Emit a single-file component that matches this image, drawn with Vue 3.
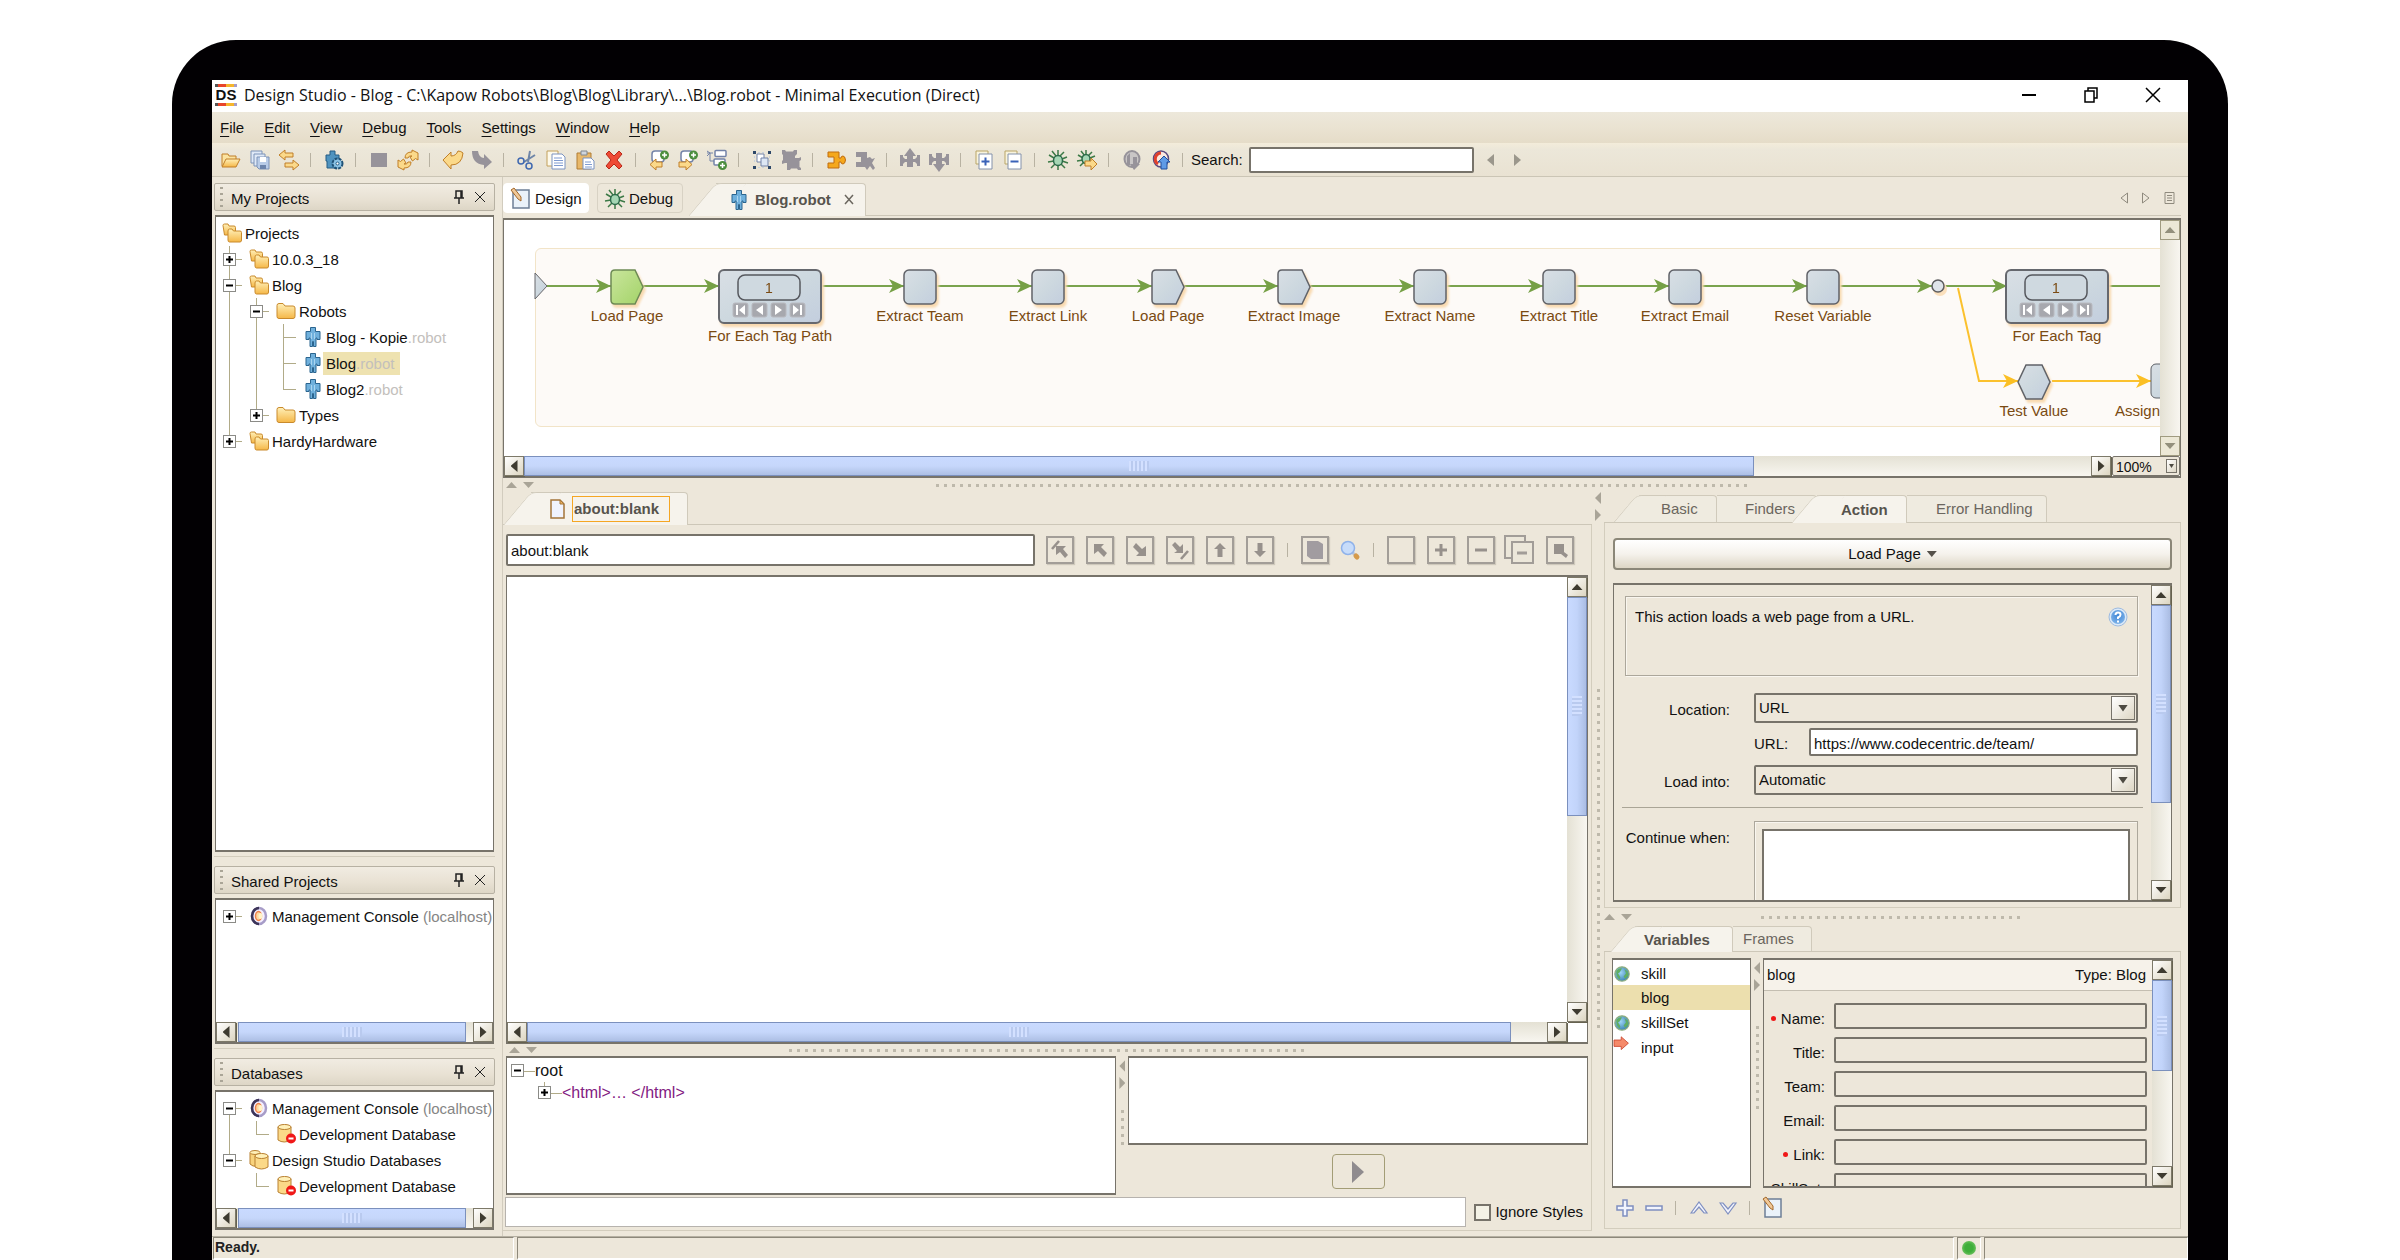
<script setup>
import { h } from 'vue'

const menus = ['File', 'Edit', 'View', 'Debug', 'Tools', 'Settings', 'Window', 'Help']

const toolGroups = [
  ['open', 'save-all', 'swap'],
  ['robot-gear'],
  ['stop', 'refresh'],
  ['undo', 'redo'],
  ['cut', 'copy', 'paste', 'delete'],
  ['step-before', 'step-after', 'branch-add'],
  ['group', 'ungroup'],
  ['snippet', 'snippet-off'],
  ['move-up', 'move-down'],
  ['expand', 'collapse'],
  ['bug', 'bug-go'],
  ['upload-off', 'upload'],
]

/* Guide cells: up/down = vertical line halves, arm = horizontal stub, box = expander sign */
const cells = {
  P: { up: 1, down: 1, arm: 1, box: '+' },
  p: { up: 1, arm: 1, box: '+' },
  q: { arm: 1, box: '+' },
  M: { up: 1, down: 1, arm: 1, box: '-' },
  F: { down: 1, arm: 1, box: '-' },
  m: { up: 1, arm: 1, box: '-' },
  T: { up: 1, down: 1, arm: 1 },
  L: { up: 1, arm: 1 },
  I: { up: 1, down: 1 },
  _: {},
}

const projectRows = [
  { guides: '', icon: 'folders', text: 'Projects' },
  { guides: 'P', icon: 'folders', text: '10.0.3_18' },
  { guides: 'M', icon: 'folders', text: 'Blog' },
  { guides: 'IM', icon: 'folder', text: 'Robots' },
  { guides: 'IIT', icon: 'robot', text: 'Blog - Kopie', dim: '.robot' },
  { guides: 'IIT', icon: 'robot', text: 'Blog', dim: '.robot', selected: true },
  { guides: 'IIL', icon: 'robot', text: 'Blog2', dim: '.robot' },
  { guides: 'Ip', icon: 'folder', text: 'Types' },
  { guides: 'p', icon: 'folders', text: 'HardyHardware' },
]
const sharedRows = [{ guides: 'q', icon: 'console', text: 'Management Console', note: '(localhost)' }]
const databaseRows = [
  { guides: 'F', icon: 'console', text: 'Management Console', note: '(localhost)' },
  { guides: 'IL', icon: 'db-off', text: 'Development Database' },
  { guides: 'm', icon: 'dbs', text: 'Design Studio Databases' },
  { guides: '_L', icon: 'db-off', text: 'Development Database' },
]
const panels = [
  { title: 'My Projects', rows: projectRows, kind: 'grow' },
  { title: 'Shared Projects', rows: sharedRows, kind: 'shared', scroll: true },
  { title: 'Databases', rows: databaseRows, kind: 'databases', scroll: true },
]

const nodes = [
  { x: 124, y: 49, kind: 'page', label: 'Load Page', current: true },
  { x: 267, y: 49, kind: 'loop', label: 'For Each Tag Path' },
  { x: 417, y: 49, kind: 'step', label: 'Extract Team' },
  { x: 545, y: 49, kind: 'step', label: 'Extract Link' },
  { x: 665, y: 49, kind: 'page', label: 'Load Page' },
  { x: 791, y: 49, kind: 'page', label: 'Extract Image' },
  { x: 927, y: 49, kind: 'step', label: 'Extract Name' },
  { x: 1056, y: 49, kind: 'step', label: 'Extract Title' },
  { x: 1182, y: 49, kind: 'step', label: 'Extract Email' },
  { x: 1320, y: 49, kind: 'step', label: 'Reset Variable' },
  { x: 1554, y: 49, kind: 'loop', label: 'For Each Tag' },
  { x: 1531, y: 144, kind: 'test', label: 'Test Value' },
]
const arrows = [107, 215, 400, 528, 648, 774, 910, 1039, 1165, 1303, 1428, 1503]

const domTools = [
  ['nav-first', 'nav-up', 'nav-down', 'nav-last', 'arrow-up', 'arrow-down'],
  ['page-box', 'zoom'],
  ['box-empty', 'box-plus', 'box-minus', 'box-stack', 'box-find'],
]

const variables = [
  { name: 'skill', icon: 'globe' },
  { name: 'blog', selected: true },
  { name: 'skillSet', icon: 'globe' },
  { name: 'input', icon: 'input' },
]
const fields = [
  { name: 'Name', required: true },
  { name: 'Title' },
  { name: 'Team' },
  { name: 'Email' },
  { name: 'Link', required: true },
  { name: 'SkillSet' },
]

/* Scroll bar with two end buttons; start and size are percentages of the track */
const ScrollBar = (props) => {
  const thumb = props.size
    ? h('div', {
        class: 'sb-thumb',
        style: props.dir === 'v'
          ? { top: (props.start || 0) + '%', height: props.size + '%' }
          : { left: (props.start || 0) + '%', width: props.size + '%' },
      }, [h('i')])
    : null
  return h('div', { class: ['sb', 'sb-' + props.dir, props.size ? '' : 'sb-idle'] }, [
    h('button', { type: 'button', class: 'sb-btn sb-prev', 'aria-label': 'Scroll back' }),
    h('div', { class: 'sb-track' }, thumb ? [thumb] : []),
    h('button', { type: 'button', class: 'sb-btn sb-next', 'aria-label': 'Scroll forward' }),
  ])
}
ScrollBar.props = ['dir', 'start', 'size']

const Icon = (props) => h('svg', { class: 'icon', width: 20, height: 20, viewBox: '0 0 20 20', 'aria-hidden': 'true' }, [
  h('use', { href: '#i-' + props.name }),
])
Icon.props = ['name']
</script>

<template>
  <svg class="defs" aria-hidden="true">
    <defs>
      <linearGradient id="g-fold" x1="0" y1="0" x2="0" y2="1"><stop offset="0" stop-color="#fff0b8" /><stop offset="1" stop-color="#f5b747" /></linearGradient>
      <linearGradient id="g-node" x1="0" y1="0" x2="1" y2="1"><stop offset="0" stop-color="#d9dfe5" /><stop offset="0.5" stop-color="#cdd8df" /><stop offset="1" stop-color="#c3cede" /></linearGradient>
      <linearGradient id="g-green" x1="0" y1="0" x2="1" y2="1"><stop offset="0" stop-color="#c9e59c" /><stop offset="1" stop-color="#a3d368" /></linearGradient>
      <radialGradient id="g-globe" cx="0.4" cy="0.4" r="0.6"><stop offset="0" stop-color="#9fd6f5" /><stop offset="1" stop-color="#3f86b5" /></radialGradient>
      <radialGradient id="g-help" cx="0.5" cy="0.4" r="0.6"><stop offset="0" stop-color="#3f86d6" /><stop offset="1" stop-color="#7db2e8" /></radialGradient>

      <symbol id="i-folder" viewBox="0 0 20 20"><path d="M1 4.500q0-2 2-2h4l2 2.500h8q2 0 2 2v8.500q0 2-2 2H3q-2 0-2-2z" fill="url(#g-fold)" stroke="#c98a2c" /></symbol>
      <symbol id="i-folders" viewBox="0 0 20 20"><path d="M1 2.500Q1 1 2.500 1H6l1 2h5q1.500 0 1.500 1.500V12H2.500z" fill="url(#g-fold)" stroke="#c98a2c" /><path d="M6 8q0-2 1.500-2H10l1.500 2H18q1.500 0 1.500 1.500V17q0 2-1.500 2H7.500Q6 19 6 17z" fill="url(#g-fold)" stroke="#c98a2c" /></symbol>
      <symbol id="i-robot" viewBox="0 0 20 20"><path d="M7.500.5h5v4h4.500v8h-3V11h-1v8.500h-2.500v-5h-1v5H7V11H6v1.500H3v-8h4.500z" fill="#6fb0dc" stroke="#2b658f" /><path d="M8.500 6v6M11.500 6v6" stroke="#a9d5f0" /></symbol>
      <symbol id="i-console" viewBox="0 0 20 20"><ellipse cx="10" cy="10" rx="7" ry="8" fill="#f4efff" stroke="#a79cc8" stroke-width="2.500" /><path d="M10 2a7 8 0 0 0 0 16" fill="none" stroke="#3c3558" stroke-width="2.500" /><ellipse cx="9.500" cy="10" rx="3" ry="4.500" fill="#ffd9a0" stroke="#f0834a" stroke-width="1.500" /><ellipse cx="11.500" cy="10" rx="2" ry="3" fill="#fff3c8" /></symbol>
      <symbol id="i-dbs" viewBox="0 0 20 20"><path d="M1 3v11q3 3 6 2V3" fill="#f8d27c" stroke="#b98030" /><ellipse cx="6" cy="2.500" rx="5" ry="2" fill="#fff0b8" stroke="#b98030" /><path d="M6 6v11q6.500 4 13 0V6" fill="#fbd988" stroke="#b98030" /><ellipse cx="12.500" cy="6" rx="6.500" ry="2.500" fill="#fff0b8" stroke="#b98030" /></symbol>
      <symbol id="i-db-off" viewBox="0 0 20 20"><path d="M2 3v13q6 4 13 0V3" fill="#fbd988" stroke="#b98030" /><ellipse cx="8.500" cy="3" rx="6.500" ry="2.500" fill="#fff0b8" stroke="#b98030" /><circle cx="15" cy="14.500" r="5" fill="#f01818" /><path d="M12.500 13.500h5v2h-5z" fill="#fff" /></symbol>
      <symbol id="i-open" viewBox="0 0 20 20"><path d="M1 16V4h6l1 2h7v3" fill="#fbe3a0" stroke="#c07f28" /><path d="M1 17 5 9h14l-4 8z" fill="url(#g-fold)" stroke="#c07f28" /></symbol>
      <symbol id="i-save-all" viewBox="0 0 20 20"><g fill="#dfe9f7" stroke="#7d93b8"><path d="M1 1h11v12H1z" /><path d="M4 4h11v12H4z" /><path d="M7 7h12v12H9l-2-2z" fill="#b9cce8" /></g><path d="M10 7h6v5h-6z" fill="#fff" /><path d="M10 15h6v4h-6z" fill="#6c84ac" /></symbol>
      <symbol id="i-swap" viewBox="0 0 20 20"><g fill="#fbd98a" stroke="#c07f28"><path d="M0 5 6 0v3h8v4H6v3z" /><path d="M20 15l-6-5v3H6v4h8v3z" /></g></symbol>
      <symbol id="i-robot-gear" viewBox="0 0 20 20"><path d="M6 1h5v4h4v5h-4v8H3v-7H2V5h4z" fill="#4f93bf" stroke="#245c84" /><circle cx="13.500" cy="13.500" r="5" fill="#8cc4e6" stroke="#1f5277" stroke-width="2" stroke-dasharray="3 1" /><circle cx="13.500" cy="13.500" r="1.500" fill="#fff" stroke="#245c84" /></symbol>
      <symbol id="i-stop" viewBox="0 0 20 20"><path d="M2 3h16v14H2z" fill="#97939a" /></symbol>
      <symbol id="i-refresh" viewBox="0 0 20 20"><g fill="#fbd98a" stroke="#c07f28"><path d="M7 8Q7 2 14 2V0l6 3v7l-2.500-1.500-3 2.500L12 7l2-1q-3-1-4 2z" /><path d="M13 12q0 6-7 6v2l-6-3v-7l2.500 1.500 3-2.500L8 13l-2 1q3 1 4-2z" /></g></symbol>
      <symbol id="i-undo" viewBox="0 0 20 20"><path d="M0 10 8 2v4q5 0 7-5 3 0 5 2-1 12-12 12v4z" fill="#fbd98a" stroke="#c07f28" /></symbol>
      <symbol id="i-redo" viewBox="0 0 20 20"><path d="M20 12 12 4v4Q7 8 6 1H0q0 13 12 14v4z" fill="#97939a" /></symbol>
      <symbol id="i-cut" viewBox="0 0 20 20"><path d="M11 12 13 1M7 12 18 5" stroke="#6f86a8" stroke-width="2" /><circle cx="4" cy="11" r="3" fill="none" stroke="#3f68b0" stroke-width="1.500" /><circle cx="12" cy="16" r="3" fill="none" stroke="#3f68b0" stroke-width="1.500" /></symbol>
      <symbol id="i-copy" viewBox="0 0 20 20"><path d="M1 1h11v15H1z" fill="#fdf9ea" stroke="#c2a05a" /><path d="M6 4h10l3 3v12H6z" fill="#fff" stroke="#7b93c0" /><path d="M8 8h8M8 10.500h9M8 13h9M8 15.500h9" stroke="#7f9bd0" /></symbol>
      <symbol id="i-paste" viewBox="0 0 20 20"><path d="M2 3h14v16H2z" fill="#e8b86a" stroke="#b07c34" /><path d="M6 1h6v4H6z" fill="#cfd5dc" stroke="#808890" /><path d="M8 8h8l3 3v8H8z" fill="#fff" stroke="#7b93c0" /><path d="M10 12h6M10 14.500h7M10 17h7" stroke="#7f9bd0" /></symbol>
      <symbol id="i-delete" viewBox="0 0 20 20"><path d="M2 4 5 1l5 5 5-5 3 3-5 6 5 6-3 3-5-5-5 5-3-3 5-6z" fill="#ee4a35" stroke="#b82718" /></symbol>
      <symbol id="i-step-before" viewBox="0 0 20 20"><rect x="3" y="1" width="12" height="11" rx="3" fill="#fff" stroke="#7383a8" stroke-width="1.500" /><circle cx="15.500" cy="5" r="4.500" fill="#4c8e3e" /><path d="M13 5h5M15.500 2.500v5" stroke="#fff" stroke-width="1.500" /><path d="M1 14.500l6-5.500v3h6v5H7v3z" fill="#fbd98a" stroke="#c07f28" /></symbol>
      <symbol id="i-step-after" viewBox="0 0 20 20"><rect x="3" y="1" width="12" height="11" rx="3" fill="#fff" stroke="#7383a8" stroke-width="1.500" /><circle cx="15.500" cy="5" r="4.500" fill="#4c8e3e" /><path d="M13 5h5M15.500 2.500v5" stroke="#fff" stroke-width="1.500" /><path d="M14 14.500 8 9v3H1v5h7v3z" fill="#fbd98a" stroke="#c07f28" /></symbol>
      <symbol id="i-branch-add" viewBox="0 0 20 20"><path d="M0 3h6M3 3v8h4M0 1l3 2-3 3" stroke="#7383a8" fill="none" /><rect x="8" y="0.500" width="11" height="6" rx="1" fill="#fff" stroke="#7383a8" stroke-width="1.500" /><rect x="7" y="9" width="11" height="6" rx="1" fill="#fff" stroke="#7383a8" stroke-width="1.500" /><circle cx="15.500" cy="15.500" r="4.500" fill="#4c8e3e" /><path d="M13 15.500h5M15.500 13v5" stroke="#fff" stroke-width="1.500" /></symbol>
      <symbol id="i-group" viewBox="0 0 20 20"><path d="M1 1h3v3H1zM16 1h3v3h-3zM1 16h3v3H1zM16 16h3v3h-3z" fill="#2d4768" /><path d="M6 2.500h8M2.500 6v8M17.500 6v8M6 17.500h8" stroke="#c9d2dd" stroke-dasharray="2 2" /><path d="M5 4h7v8H5z" fill="#fff" stroke="#7383a8" /><path d="M9 8h7v8H9z" fill="#dde7f4" stroke="#7383a8" /></symbol>
      <symbol id="i-ungroup" viewBox="0 0 20 20"><path d="M1 0h3l1 1.500h7L13 0h3v4l-2 2v2h4l2-1v3l-1.500 1v6l1.500 1v2h-3l-1-1.500H10L9 20H6v-7H4l-3 1v-3l1-1V5L1 4z" fill="#97939a" /></symbol>
      <symbol id="i-snippet" viewBox="0 0 20 20"><path d="M2 2h11v6h2q0-2 2-2t2.500 4q-.5 4-2.500 4t-2-2h-2v6H2v-5h6V7H2z" fill="#f5a81c" stroke="#bf6c10" /></symbol>
      <symbol id="i-snippet-off" viewBox="0 0 20 20"><path d="M1 2h11v6l3-1 2 2 3-1-3 5 3 5-2 2-3-4-3 4-2-3H1v-5h5V7H1z" fill="#97939a" /></symbol>
      <symbol id="i-move-up" viewBox="0 0 20 20"><path d="M10-2l6 8h-3v3h2l2-2v-2h3v11h-3v-2l-2-2h-2v5H7v-5H5l-2 2v2H0V5h3v2l2 2h2V6H4z" fill="#97939a" /></symbol>
      <symbol id="i-move-down" viewBox="0 0 20 20"><path d="M10 22l6-8h-3v-3h2l2 2v2h3V4h-3v2l-2 2h-2V3H7v5H5L3 6V4H0v11h3v-2l2-2h2v3H4z" fill="#97939a" /></symbol>
      <symbol id="i-expand" viewBox="0 0 20 20"><path d="M2 1h12v13H2z" fill="#f8f3dd" stroke="#b9a566" /><path d="M5 4h13v15H5z" fill="#fff" stroke="#8492ab" /><path d="M7.500 11.500h8M11.500 7.500v8" stroke="#3a62b8" stroke-width="2" /></symbol>
      <symbol id="i-collapse" viewBox="0 0 20 20"><path d="M2 1h12v13H2z" fill="#f8f3dd" stroke="#b9a566" /><path d="M5 4h13v15H5z" fill="#fff" stroke="#8492ab" /><path d="M7.500 11.500h8" stroke="#3a62b8" stroke-width="2" /></symbol>
      <symbol id="i-bug" viewBox="0 0 20 20"><path d="M1 5l5 3M4 1l4 5M10 0v5M16 2l-4 4M19 7l-5 2M0 12l6-1M3 18l4-4M10 20v-4M17 18l-4-4M20 13l-6-2" stroke="#3c7a46" stroke-width="1.500" /><ellipse cx="10" cy="10.500" rx="4.500" ry="5" fill="#a5d6b4" stroke="#2c6a4a" stroke-width="1.500" /></symbol>
      <symbol id="i-bug-go" viewBox="0 0 20 20"><path d="M1 5l5 3M4 1l4 5M9 0v5M15 2l-4 4M18 6l-5 2M0 11l6-1M3 16l4-4" stroke="#3c7a46" stroke-width="1.500" /><ellipse cx="9" cy="9" rx="4" ry="4.500" fill="#a5d6b4" stroke="#2c6a4a" stroke-width="1.500" /><path d="M20 14l-6-6v3H8v5h6v4z" fill="#fbd98a" stroke="#c07f28" /></symbol>
      <symbol id="i-upload-off" viewBox="0 0 20 20"><ellipse cx="10" cy="9" rx="7.500" ry="8" fill="#c9c6c6" stroke="#97939a" stroke-width="2" /><path d="M12 20l6-6h-3V7h-4v7H8zM5 6l3-3v12H5z" fill="#97939a" /></symbol>
      <symbol id="i-upload" viewBox="0 0 20 20"><ellipse cx="10" cy="9" rx="7.500" ry="8" fill="#fbe9df" stroke="#5a4a80" stroke-width="1.500" /><path d="M10 3a6 6 0 0 0-3 11" fill="none" stroke="#e0402c" stroke-width="3" /><path d="M13 6l6 6h-3v7h-6v-7H7z" fill="#5f9be6" stroke="#204f9c" /></symbol>

      <symbol id="i-design" viewBox="0 0 20 20"><path d="M2 1h16v18H2z" fill="#eaf2fa" stroke="#6d7f96" stroke-width="1.500" /><path d="M0 1l3-2 7 9v4L7 10z" fill="#f0c898" stroke="#a4692a" /></symbol>
      <symbol id="i-page" viewBox="0 0 20 20"><path d="M3 1h9l4 4v14H3z" fill="#f0f3fd" stroke="#a4763a" stroke-width="1.500" /><path d="M12 1v4h4z" fill="#f0b25c" stroke="#a4763a" /></symbol>
      <symbol id="i-globe" viewBox="0 0 20 20"><circle cx="10" cy="10" r="9" fill="url(#g-globe)" stroke="#8fae7c" stroke-width="1.500" /><path d="M3 6q3-4 7-3l-3 5-2 1 3 5-1 3q-5-4-4-11zM13 4l4 3 1 5-4 4-2-3 3-4z" fill="#5fae62" /></symbol>
      <symbol id="i-input" viewBox="0 0 20 20"><path d="M0 0h9v-4l9 8-9 8V8H0z" fill="#f58a6a" stroke="#c8402a" /></symbol>
      <symbol id="i-help" viewBox="0 0 20 20"><circle cx="10" cy="10" r="9" fill="#dbe9f8" stroke="#9dbbe0" /><circle cx="10" cy="10" r="7" fill="url(#g-help)" /><path d="M7.500 8q0-2.500 2.500-2.500t2.500 2.200q0 1.800-2.500 2.800v1.500" fill="none" stroke="#fff" stroke-width="2" /><path d="M9 13.500h2v2H9z" fill="#fff" /></symbol>
      <symbol id="i-zoom" viewBox="0 0 20 20"><path d="M12 12l4 4" stroke="#b9c6dc" stroke-width="3" /><path d="M16 16l1 1" stroke="#d59a4a" stroke-width="5" stroke-linecap="round" /><circle cx="8" cy="8" r="6.500" fill="#c7dcfa" stroke="#8fb2ea" stroke-width="1.500" /></symbol>
      <symbol id="i-nav-first" viewBox="0 0 20 20"><path d="M2 9l7-8" stroke="#97918c" stroke-width="2.500" /><path d="M6 6h10l-3 3 5 6-3 3-5-6-4 3z" fill="#97918c" /></symbol>
      <symbol id="i-nav-up" viewBox="0 0 20 20"><path d="M4 4h10l-3 3 6 6-3 4-6-6-4 3z" fill="#97918c" /></symbol>
      <symbol id="i-nav-down" viewBox="0 0 20 20"><path d="M16 16H6l3-3-6-6 3-4 6 6 4-3z" fill="#97918c" /></symbol>
      <symbol id="i-nav-last" viewBox="0 0 20 20"><path d="M13 13H4l3-2-5-6 3-3 5 5 3-3z" fill="#97918c" /><path d="M11 19l7-8" stroke="#97918c" stroke-width="2.500" /></symbol>
      <symbol id="i-arrow-up" viewBox="0 0 20 20"><path d="M10 3l6 6h-3.500v8h-5V9H4z" fill="#97918c" /></symbol>
      <symbol id="i-arrow-down" viewBox="0 0 20 20"><path d="M10 17l6-6h-3.500V3h-5v8H4z" fill="#97918c" /></symbol>
      <symbol id="i-page-box" viewBox="0 0 20 20"><path d="M2 1h11l5 3v15H6l-4-3z" fill="#a19ca0" /></symbol>
      <symbol id="i-box-plus" viewBox="0 0 20 20"><path d="M4 10h12M10 4v12" stroke="#97918c" stroke-width="3" /></symbol>
      <symbol id="i-box-minus" viewBox="0 0 20 20"><path d="M4 10h12" stroke="#97918c" stroke-width="3" /></symbol>
      <symbol id="i-box-find" viewBox="0 0 20 20"><path d="M4 4h10v8l4 3-2 3-5-4H4z" fill="#97918c" /></symbol>
      <symbol id="i-add" viewBox="0 0 20 20"><path d="M8 2h4v6h6v4h-6v6H8v-6H2V8h6z" fill="#f2f4fd" stroke="#7f8fc0" stroke-width="1.500" /></symbol>
      <symbol id="i-remove" viewBox="0 0 20 20"><path d="M2 8h16v4H2z" fill="#f2f4fd" stroke="#7f8fc0" stroke-width="1.500" /></symbol>
      <symbol id="i-up" viewBox="0 0 20 20"><path d="M2 15l8-11 8 11h-3l-5-6-5 6z" fill="#f2f4fd" stroke="#7f8fc0" stroke-width="1.200" /></symbol>
      <symbol id="i-down" viewBox="0 0 20 20"><path d="M2 5l8 11 8-11h-3l-5 6-5-6z" fill="#f2f4fd" stroke="#7f8fc0" stroke-width="1.200" /></symbol>
    </defs>
  </svg>

  <div class="stage">
    <div class="bezel">
      <div class="window">
        <header class="titlebar">
          <span class="logo" aria-hidden="true">DS</span>
          <h1>Design Studio - Blog - C:\Kapow Robots\Blog\Blog\Library\...\Blog.robot - Minimal Execution (Direct)</h1>
          <div class="win-buttons">
            <button type="button" aria-label="Minimize"><svg width="16" height="16"><path d="M1 8h14" stroke="#000" stroke-width="2" /></svg></button>
            <button type="button" aria-label="Restore"><svg width="16" height="16" fill="none" stroke="#000" stroke-width="1.500"><path d="M2 4h9v11H2zM5 4V1h9v10h-3" /></svg></button>
            <button type="button" aria-label="Close"><svg width="16" height="16"><path d="M1 1l14 14M15 1 1 15" stroke="#000" stroke-width="1.500" /></svg></button>
          </div>
        </header>

        <nav class="menubar">
          <button v-for="m in menus" :key="m" type="button"><u>{{ m[0] }}</u>{{ m.slice(1) }}</button>
        </nav>

        <div class="toolbar">
          <template v-for="(g, i) in toolGroups" :key="i">
            <button v-for="t in g" :key="t" type="button" class="tool" :aria-label="t"><Icon :name="t" /></button>
            <span class="sep"></span>
          </template>
          <label class="search" for="search">Search:</label>
          <input id="search" class="field search-field" type="text" />
          <button type="button" class="find" aria-label="Previous"><svg width="8" height="12"><path d="M8 0v12L1 6z" fill="#9b978c" /></svg></button>
          <button type="button" class="find" aria-label="Next"><svg width="8" height="12"><path d="M0 0v12l7-6z" fill="#9b978c" /></svg></button>
        </div>

        <div class="workspace">
          <aside class="side">
            <section v-for="p in panels" :key="p.title" class="panel" :class="p.kind">
              <div class="panel-head">
                <span class="grip"></span>
                <h2>{{ p.title }}</h2>
                <button type="button" aria-label="Pin"><svg width="10" height="14" fill="none" stroke="#222" stroke-width="1.500"><path d="M2 1h6v7H2zM0 8h10M5 8v6M7 1v7" /></svg></button>
                <button type="button" aria-label="Close"><svg width="12" height="12"><path d="M1 1l10 10M11 1 1 11" stroke="#222" /></svg></button>
              </div>
              <div class="well tree-well">
                <ul class="tree">
                  <li v-for="(r, i) in p.rows" :key="i">
                    <svg v-for="(c, k) in r.guides" :key="k" class="guide" width="27" height="26" aria-hidden="true">
                      <g stroke="#b1ab88" fill="none">
                        <path v-if="cells[c].up" d="M13.500 0v13" />
                        <path v-if="cells[c].down" d="M13.500 13v13" />
                        <path v-if="cells[c].arm" d="M13 13.500h13" />
                      </g>
                      <g v-if="cells[c].box">
                        <rect x="7.500" y="7.500" width="12" height="12" fill="#fff" stroke="#8b8b87" />
                        <path d="M10 13.500h7" stroke="#000" stroke-width="2" />
                        <path v-if="cells[c].box === '+'" d="M13.500 10v7" stroke="#000" stroke-width="2" />
                      </g>
                    </svg>
                    <Icon :name="r.icon" />
                    <span class="name" :class="{ selected: r.selected }">{{ r.text }}<span v-if="r.dim" class="dim">{{ r.dim }}</span><span v-if="r.note" class="note">{{ ' ' + r.note }}</span></span>
                  </li>
                </ul>
                <ScrollBar v-if="p.scroll" dir="h" :start="1" :size="96" />
              </div>
            </section>
          </aside>

          <main class="main">
            <div class="modes">
              <button type="button" class="mode on"><Icon name="design" />Design</button>
              <button type="button" class="mode"><Icon name="bug" />Debug</button>
              <div class="tabs doc-tabs" role="tablist">
                <button type="button" class="tab slant on" role="tab"><Icon name="robot" /><b>Blog.robot</b><svg width="10" height="12"><path d="M1 1l8 9M9 1 1 10" stroke="#6b675f" stroke-width="1.500" /></svg></button>
              </div>
              <div class="tab-nav">
                <button type="button" aria-label="Previous tab"><svg width="8" height="12" fill="none" stroke="#8f8a7e"><path d="M7.500 1v10L1 6z" /></svg></button>
                <button type="button" aria-label="Next tab"><svg width="8" height="12" fill="none" stroke="#8f8a7e"><path d="M.5 1v10L7 6z" /></svg></button>
                <button type="button" aria-label="Tab list"><svg width="11" height="12" fill="none" stroke="#8f8a7e"><path d="M1 .5h9v11H1zM3 3.500h5M3 6h5M3 8.500h5" /></svg></button>
              </div>
            </div>

            <section class="flow">
              <div class="flow-body">
                <div class="canvas">
                  <div class="lane"></div>
                  <svg class="wires" aria-hidden="true">
                    <path d="M31 53l12 13-12 13z" fill="url(#g-node)" stroke="#66666a" />
                    <path d="M43 66h1614" stroke="#7aa34e" stroke-width="2" />
                    <path v-for="a in arrows" :key="a" :transform="`translate(${a} 66)`" d="M0 0l-15-7 4 7-4 7z" fill="#76a046" />
                    <g stroke="#fbc12e" stroke-width="2" fill="none">
                      <path d="M1454 68l21 93h39M1548 161h99" />
                    </g>
                    <path d="M1514 161l-15-7 4 7-4 7zM1647 161l-15-7 4 7-4 7z" fill="#fbbf24" />
                    <circle cx="1436" cy="69" r="7" fill="#fbe0bd" />
                    <circle cx="1434" cy="66" r="6" fill="#dfe4ea" stroke="#5d5d60" stroke-width="1.500" />
                    <rect x="1647" y="144" width="34" height="34" rx="5" fill="url(#g-node)" stroke="#5d6066" />
                  </svg>
                  <div v-for="(n, i) in nodes" :key="i" class="node" :style="{ left: n.x + 'px', top: n.y + 'px' }">
                    <svg v-if="n.kind === 'loop'" class="shape" width="104" height="56">
                      <rect x="1" y="1" width="102" height="53" rx="5" fill="url(#g-node)" stroke="#66686e" stroke-width="2" />
                      <rect x="20" y="6" width="62" height="25" rx="7" fill="#cfd9e0" stroke="#56585e" stroke-width="1.500" />
                      <text x="51" y="24" text-anchor="middle">1</text>
                      <g fill="#a7a8ae" stroke="#b9bac0"><rect x="15" y="34" width="15" height="14" rx="2" /><rect x="34" y="34" width="15" height="14" rx="2" /><rect x="53" y="34" width="15" height="14" rx="2" /><rect x="72" y="34" width="15" height="14" rx="2" /></g>
                      <path d="M18 36h2v10h-2zM27 36v10l-6-5zM45 36v10l-7-5zM57 36v10l7-5zM75 36v10l6-5zM82 36h2v10h-2z" fill="#fff" />
                    </svg>
                    <svg v-else class="shape" width="34" height="36">
                      <rect v-if="n.kind === 'step'" x="1" y="1" width="32" height="34" rx="5" fill="url(#g-node)" stroke="#606268" stroke-width="1.500" />
                      <path v-if="n.kind === 'page'" d="M5 1h20l8 17-8 17H5q-4 0-4-4V5q0-4 4-4z" :fill="n.current ? 'url(#g-green)' : 'url(#g-node)'" :stroke="n.current ? '#6d8a55' : '#606268'" stroke-width="1.500" />
                      <path v-if="n.kind === 'test'" d="M9 1h16l8 17-8 17H9L1 18z" fill="url(#g-node)" stroke="#606268" stroke-width="1.500" />
                    </svg>
                    <span>{{ n.label }}</span>
                  </div>
                  <span class="cut-label">Assign</span>
                </div>
                <ScrollBar dir="v" />
              </div>
              <div class="flow-foot">
                <ScrollBar dir="h" :start="0" :size="78.5" />
                <div class="pick zoom-pick"><select aria-label="Zoom"><option>100%</option></select><i></i></div>
              </div>
            </section>

            <div class="split-h"><i class="tri up"></i><i class="tri down"></i><span class="dots wide"></span></div>

            <div class="lower">
              <section class="browser">
                <div class="tabs">
                  <button type="button" class="tab slant on" role="tab"><Icon name="page" /><b class="framed">about:blank</b></button>
                </div>
                <div class="browser-body">
                  <div class="address">
                    <input class="field url" type="text" value="about:blank" aria-label="Address" />
                    <template v-for="(g, i) in domTools" :key="i">
                      <span v-if="i" class="sep"></span>
                      <template v-for="t in g" :key="t">
                        <button v-if="t === 'zoom'" type="button" class="plain" aria-label="zoom"><Icon name="zoom" /></button>
                        <button v-else-if="t === 'box-stack'" type="button" class="plain stack" aria-label="collapse all">
                          <svg width="30" height="30" fill="#ece7da" stroke="#a29d98" stroke-width="2"><path d="M1 1h20v22H1z" /><path d="M8 7h21v21H8z" /><path d="M13 18h10" stroke-width="3" /></svg>
                        </button>
                        <button v-else type="button" class="boxed" :aria-label="t"><Icon :name="t" /></button>
                      </template>
                    </template>
                  </div>
                  <div class="well page-view">
                    <div class="page-row">
                      <div class="blank"></div>
                      <ScrollBar dir="v" :start="0" :size="54" />
                    </div>
                    <div class="page-foot"><ScrollBar dir="h" :start="0" :size="96.5" /></div>
                  </div>
                  <div class="split-h thin"><i class="tri up"></i><i class="tri down"></i><span class="dots mid"></span></div>
                  <div class="dom">
                    <div class="well dom-tree">
                      <div class="dom-row"><svg width="24" height="22"><path d="M12 11.500h12" stroke="#b1ab88" /><rect x=".5" y="4.500" width="12" height="12" fill="#fff" stroke="#8b8b87" /><path d="M3 10.500h7" stroke="#000" stroke-width="2" /></svg>root</div>
                      <div class="dom-row tag"><svg width="24" height="22"><path d="M6.500 0v6M12 11.500h12" stroke="#b1ab88" /><rect x=".5" y="4.500" width="12" height="12" fill="#fff" stroke="#8b8b87" /><path d="M3 10.500h7M6.500 7v7" stroke="#000" stroke-width="2" /></svg>&lt;html&gt;…&nbsp;&lt;/html&gt;</div>
                    </div>
                    <div class="split-v"><i class="tri left"></i><i class="tri right"></i><span class="dots-v"></span></div>
                    <div class="dom-side">
                      <div class="well"></div>
                      <button type="button" class="play" aria-label="Run"><svg width="12" height="22"><path d="M0 0v22l12-11z" fill="#8f8b8e" /></svg></button>
                    </div>
                  </div>
                  <div class="path">
                    <input type="text" aria-label="Path" />
                    <label><input type="checkbox" />Ignore Styles</label>
                  </div>
                </div>
              </section>

              <div class="split-v main-v"><i class="tri left"></i><i class="tri right"></i><span class="dots-v"></span></div>

              <section class="inspector">
                <div class="tabs insp-tabs" role="tablist">
                  <button type="button" class="tab slant basic" role="tab">Basic</button>
                  <button type="button" class="tab finders" role="tab">Finders</button>
                  <button type="button" class="tab slant on action" role="tab"><b>Action</b></button>
                  <button type="button" class="tab errors" role="tab">Error Handling</button>
                </div>
                <div class="insp-body">
                  <button type="button" class="big">Load Page<i class="tri down"></i></button>
                  <div class="scroll-box action-box">
                    <form class="action-form">
                      <div class="note-box"><p>This action loads a web page from a URL.</p><Icon name="help" /></div>
                      <div class="row"><label for="loc">Location:</label><div class="pick"><select id="loc"><option>URL</option></select><i></i></div></div>
                      <div class="row url-row"><span></span><label for="url">URL:</label><input id="url" class="field" type="text" value="https://www.codecentric.de/team/" /></div>
                      <div class="row"><label for="into">Load into:</label><div class="pick"><select id="into"><option>Automatic</option></select><i></i></div></div>
                      <hr />
                      <div class="row top"><label for="cont">Continue when:</label><div class="inset"><textarea id="cont"></textarea></div></div>
                    </form>
                    <ScrollBar dir="v" :start="0" :size="72" />
                  </div>
                </div>

                <div class="split-h tall"><i class="tri up"></i><i class="tri down"></i><span class="dots short"></span></div>

                <div class="tabs var-tabs" role="tablist">
                  <button type="button" class="tab slant on vars-tab" role="tab"><b>Variables</b></button>
                  <button type="button" class="tab frames" role="tab">Frames</button>
                </div>
                <div class="var-body">
                  <div class="var-cols">
                    <ul class="well vars">
                      <li v-for="v in variables" :key="v.name" :class="{ selected: v.selected }"><span class="slot"><Icon v-if="v.icon" :name="v.icon" /></span>{{ v.name }}</li>
                    </ul>
                    <div class="split-v"><i class="tri left"></i><i class="tri right"></i><span class="dots-v"></span></div>
                    <div class="scroll-box">
                      <form class="var-form">
                        <div class="var-head"><span>blog</span><span>Type: Blog</span></div>
                        <div v-for="f in fields" :key="f.name" class="var-row">
                          <label :for="'f-' + f.name"><i v-if="f.required"></i>{{ f.name }}:</label>
                          <input :id="'f-' + f.name" type="text" />
                        </div>
                      </form>
                      <ScrollBar dir="v" :start="0" :size="49" />
                    </div>
                  </div>
                  <div class="var-tools">
                    <button type="button" class="tool" aria-label="Add"><Icon name="add" /></button>
                    <button type="button" class="tool" aria-label="Remove"><Icon name="remove" /></button>
                    <span class="sep"></span>
                    <button type="button" class="tool" aria-label="Move up"><Icon name="up" /></button>
                    <button type="button" class="tool" aria-label="Move down"><Icon name="down" /></button>
                    <span class="sep"></span>
                    <button type="button" class="tool" aria-label="Edit"><Icon name="design" /></button>
                  </div>
                </div>
              </section>
            </div>
          </main>
        </div>

        <footer class="status">
          <div class="ready">Ready.</div>
          <div class="fill"></div>
          <div class="led"><i></i></div>
          <div class="end"></div>
        </footer>
      </div>
    </div>
  </div>
</template>

<style>
body { margin: 0; background: #fff; }
button, input, select, textarea { font: inherit; color: inherit; }
button { padding: 0; border: 0; background: none; }

.icon { display: block; flex: none; overflow: visible; }
.icon use, symbol { overflow: visible; }

.sb { display: flex; flex: none; background: linear-gradient(#e4e1d4, #f8f6f0); }
.sb-h { height: 20px; }
.sb-v { width: 20px; flex-direction: column; background: linear-gradient(90deg, #e4e1d4, #f8f6f0); }
.sb-btn { position: relative; flex: none; width: 20px; height: 20px; box-sizing: border-box; border: 1px solid #7d7969; background: linear-gradient(135deg, #fff, #dcd5c0); box-shadow: 1px 1px 0 #66624f; }
.sb-btn::after { content: ''; position: absolute; inset: 0; margin: auto; width: 7px; height: 12px; background: #3e3b30; }
.sb-h .sb-prev::after { clip-path: polygon(100% 0, 100% 100%, 0 50%); }
.sb-h .sb-next::after { clip-path: polygon(0 0, 0 100%, 100% 50%); }
.sb-v .sb-btn::after { width: 11px; height: 6px; }
.sb-v .sb-prev::after { clip-path: polygon(0 100%, 100% 100%, 50% 0); }
.sb-v .sb-next::after { clip-path: polygon(0 0, 100% 0, 50% 100%); }
.sb-idle .sb-btn { background: #ece8d6; border-color: #a09b80; box-shadow: none; }
.sb-idle .sb-btn::after { background: #93907c; }
.sb-track { position: relative; flex: 1; min-width: 0; min-height: 0; }
.sb-thumb { position: absolute; box-sizing: border-box; border: 1px solid #7b90bd; display: flex; align-items: center; justify-content: center; }
.sb-h .sb-thumb { top: 0; bottom: 0; background: linear-gradient(#c9daff, #c6d7fb 50%, #adbfe4); }
.sb-v .sb-thumb { left: 0; right: 0; background: linear-gradient(90deg, #c9daff, #c2d4fa 50%, #abbde3); }
.sb-h .sb-thumb i { width: 20px; height: 10px; background: repeating-linear-gradient(90deg, #d3e0ff 0 2px, #b9caef 2px 4px); }
.sb-v .sb-thumb i { width: 10px; height: 20px; background: repeating-linear-gradient(#d3e0ff 0 2px, #b9caef 2px 4px); }
</style>

<style scoped>
.defs { position: absolute; width: 0; height: 0; }
.stage { display: flex; height: 100vh; box-sizing: border-box; padding: 40px 172px 0; overflow: hidden; font: 15px/20px "Liberation Sans", Arial, sans-serif; color: #111; }
.bezel { flex: 1; min-width: 0; display: flex; box-sizing: border-box; padding: 40px 40px 0; border-radius: 64px 64px 0 0; background: #020003; }
.window { flex: 1; min-width: 0; display: flex; flex-direction: column; background: #ede7da; }
h1, h2, p, ul { margin: 0; padding: 0; font: inherit; list-style: none; }

.titlebar { display: flex; align-items: center; height: 32px; padding: 0 27px 3px 3px; box-sizing: border-box; background: #fff; }
.logo { width: 22px; height: 22px; box-sizing: border-box; border: solid; border-width: 3px 0; border-image: linear-gradient(90deg, #555 0 25%, #e8452c 25% 50%, #f6b52c 50% 75%, #a79cc8 75%) 3; font: bold 15px/16px "Liberation Sans", Arial, sans-serif; text-align: center; }
.titlebar h1 { flex: 1; margin-left: 7px; font: 16px/20px "Open Sans", sans-serif; color: #111; white-space: nowrap; }
.win-buttons { display: flex; gap: 46px; }
.win-buttons button { display: flex; width: 16px; }

.menubar { display: flex; align-items: center; gap: 20px; height: 31px; padding-left: 8px; background: linear-gradient(#ede8db, #eae3d2 50%, #e5dcc8); }
.menubar u { text-underline-offset: 3px; text-decoration-thickness: 1px; }

.toolbar { display: flex; align-items: center; height: 34px; box-sizing: border-box; padding-left: 4px; border-bottom: 1px solid #cbc5b5; background: linear-gradient(#f3ecda, #ece7d9 20%, #e9e2d2); }
.tool { display: flex; justify-content: center; width: 29px; }
.sep { flex: none; width: 1px; height: 14px; margin: 0 8px 0 7px; background: #b8b2a2; }
.field { box-sizing: border-box; min-width: 0; border: 2px solid #77736a; border-radius: 2px; padding: 0 3px; background: #fff; outline: 0; }
.search-field { width: 225px; height: 26px; margin-left: 6px; }
.find { display: flex; margin-left: 12px; width: 8px; }
.find + .find { margin-left: 20px; }

.workspace { flex: 1; min-height: 0; display: flex; border-bottom: 1px solid #b5b0a2; }
.side { flex: none; width: 281px; display: flex; flex-direction: column; padding: 6px 7px 0 2px; border-right: 1px solid #d2ccbe; }
.panel { display: flex; flex-direction: column; gap: 4px; padding-bottom: 4px; margin-bottom: 9px; border-bottom: 1px solid #d3cdbd; }
.grow { flex: 1; min-height: 0; }
.shared { height: 178px; }
.databases { height: 172px; margin-bottom: 2px; border-bottom: 0; }
.panel-head { flex: none; display: flex; align-items: center; height: 28px; box-sizing: border-box; padding: 0 8px 0 5px; border: 1px solid #b7b1a3; border-radius: 2px; background: linear-gradient(#f1ece2, #e8e1d3 60%, #ddd6c6); }
.panel-head h2 { flex: 1; padding-top: 4px; }
.panel-head button { display: flex; margin-left: 10px; }
.grip { width: 3px; height: 20px; margin-right: 8px; background: repeating-linear-gradient(#aaa597 0 2px, transparent 2px 6px); }
.well { box-sizing: border-box; border: 2px solid #77736a; border-width: 2px 1px; background: #fff; }
.tree-well { flex: 1; min-height: 0; display: flex; flex-direction: column; margin: 0 1px; overflow: hidden; }
.tree { flex: 1; min-height: 0; padding-top: 3px; }
.tree li { display: flex; align-items: center; height: 26px; white-space: nowrap; }
.guide { flex: none; }
.tree .icon { margin-left: 6px; }
.name { padding: 2px 3px 1px; }
.name.selected { background: #eee2b0; padding-right: 6px; }
.dim { color: #c3c0bc; }
.note { color: #858585; }

.main { flex: 1; min-width: 0; display: flex; flex-direction: column; padding: 6px 7px 0 0; }
.modes { display: flex; height: 33px; margin-bottom: 2px; }
.mode { display: flex; align-items: center; gap: 4px; height: 30px; width: 86px; margin: 0 8px 0 0; padding: 2px 7px 0; box-sizing: border-box; border: 1px solid #d8d2c4; border-radius: 4px; }
.mode.on { background: #fff; border-color: #fff; }
.modes, .tabs { position: relative; }
.tabs { display: flex; flex: none; height: 33px; box-sizing: border-box; border-bottom: 1px solid #cdc7b8; }
.doc-tabs { flex: 1; height: 33px; }
.tab { position: relative; isolation: isolate; display: flex; align-items: center; height: 100%; box-sizing: border-box; border: 1px solid #d0cabb; border-width: 1px 1px 0 0; border-radius: 0 4px 0 0; background: #efebe0; color: #6b665e; }
.tab.slant::before { content: ''; position: absolute; z-index: -1; top: -1px; bottom: 0; left: -14px; width: 30px; border: 1px solid #d0cabb; border-width: 1px 0 0 1px; border-radius: 6px 0 0 0; background: inherit; transform: skewX(-40deg); }
.tab.on { height: 33px; background: #f6f3ec; color: #57534d; z-index: 1; }
.doc-tabs .tab { margin-left: 25px; padding: 0 11px 0 13px; gap: 6px; }
.doc-tabs .tab svg:last-child { margin-left: 7px; }
.tab-nav { display: flex; align-items: center; gap: 14px; padding: 0 6px 2px; border-bottom: 1px solid #cdc7b8; }
.tab-nav button { display: flex; }

.flow { flex: none; display: flex; flex-direction: column; height: 260px; box-sizing: border-box; border: 2px solid #77736a; border-width: 2px 1px; background: #fff; }
.flow-body { flex: 1; min-height: 0; display: flex; }
.canvas { position: relative; flex: 1; min-width: 0; overflow: hidden; }
.lane { position: absolute; left: 31px; top: 28px; right: -10px; height: 177px; border: 1px solid #f2e4c8; border-radius: 6px; background: #fdfaf7; }
.wires { position: absolute; left: 0; top: 0; width: 100%; height: 100%; }
.node { position: absolute; width: 140px; margin-left: -71px; text-align: center; color: #7a4a12; white-space: nowrap; line-height: 18px; }
.node text { font-size: 14px; fill: #7a4a12; }
.shape { display: block; margin: 0 auto 2px; filter: drop-shadow(2px 3px 1px #f8d9b0); }
.cut-label { position: absolute; left: 1611px; top: 182px; color: #7a4a12; line-height: 18px; }
.flow-foot { flex: none; display: flex; height: 20px; }
.flow-foot .sb { flex: 1; }

.split-h { flex: none; position: relative; display: flex; align-items: center; gap: 6px; height: 14px; padding: 0 37px 0 3px; }
.thin { height: 12px; }
.tall { height: 18px; padding-left: 0; }
.tri { width: 11px; height: 6px; background: #a9a497; }
.tri.up { clip-path: polygon(0 100%, 100% 100%, 50% 0); }
.tri.down { clip-path: polygon(0 0, 100% 0, 50% 100%); }
.tri.left { width: 6px; height: 12px; clip-path: polygon(100% 0, 100% 100%, 0 50%); }
.tri.right { width: 6px; height: 12px; clip-path: polygon(0 0, 0 100%, 100% 50%); }
.dots { height: 3px; margin: 0 auto; background: repeating-linear-gradient(90deg, #beb9ab 0 3px, transparent 3px 8px); }
.wide { width: 812px; }
.mid { width: 516px; }
.short { width: 260px; }
.split-v { flex: none; position: relative; display: flex; flex-direction: column; align-items: center; gap: 5px; width: 12px; padding: 4px 0 44px; box-sizing: border-box; }
.dots-v { width: 3px; height: 88px; margin: auto 0; background: repeating-linear-gradient(#beb9ab 0 3px, transparent 3px 8px); }
.dom .split-v { padding-bottom: 34px; }
.dom .dots-v { height: 36px; }
.main-v { padding-top: 0; }
.main-v .dots-v { height: 340px; }

.lower { flex: 1; min-height: 0; display: flex; }
.browser { flex: 1; min-width: 0; display: flex; flex-direction: column; padding-bottom: 5px; }
.browser .tab { margin-left: 28px; padding: 0 17px 0 17px; gap: 4px; }
.browser .tab.on { height: 33px; }
.framed { padding: 2px 10px 2px 1px; border: 1px solid #f5a623; }
.browser-body { flex: 1; min-height: 0; display: flex; flex-direction: column; padding: 9px 3px 3px 3px; border-right: 1px solid #d3cdbd; border-bottom: 1px solid #d3cdbd; }
.address { flex: none; display: flex; align-items: center; height: 32px; margin-bottom: 9px; padding-right: 14px; }
.url { flex: 1; height: 32px; }
.boxed { display: flex; align-items: center; justify-content: center; width: 28px; height: 28px; box-sizing: border-box; margin-left: 12px; border: 2px solid #a39e98; box-shadow: 1px 1px 1px #cfc9bc; }
.url + .boxed { margin-left: 11px; }
.plain { display: flex; margin-left: 11px; }
.stack { margin-left: 9px; }
.address .sep { margin: 0 1px 0 13px; }
.page-view { flex: 1; min-height: 0; display: flex; flex-direction: column; }
.page-row { flex: 1; min-height: 0; display: flex; }
.blank { flex: 1; }
.page-foot { padding-right: 20px; }
.dom { flex: none; display: flex; height: 139px; }
.dom-tree { flex: 606; padding: 2px 4px; }
.dom-row { display: flex; align-items: center; height: 22px; font-size: 16px; }
.dom-row.tag { margin-left: 27px; color: #822082; }
.dom-side { flex: 464; display: flex; flex-direction: column; align-items: center; }
.dom-side .well { align-self: stretch; height: 89px; margin-bottom: 9px; }
.play { display: flex; align-items: center; justify-content: center; width: 53px; height: 35px; border: 1px solid #a39d76; border-radius: 4px; }
.path { flex: none; display: flex; margin: 2px 0 0 -1px; }
.path > input { flex: 1; min-width: 0; height: 30px; box-sizing: border-box; border: 1px solid #b7b3ae; background: #fff; }
.path label { display: flex; align-items: center; gap: 4px; padding: 0 5px 0 8px; }
.path label input { appearance: none; width: 17px; height: 17px; margin: 0; border: 2px solid #77736a; background: #f4f2e6; }

.inspector { flex: none; width: 577px; display: flex; flex-direction: column; padding-bottom: 7px; }
.insp-tabs { height: 31px; padding-top: 3px; }
.insp-tabs .tab.on { height: 28px; }
.basic { margin-left: 35px; width: 78px; padding-left: 22px; }
.finders { width: 100px; padding-left: 28px; margin-right: -26px; }
.action { margin-left: 26px; width: 90px; padding-left: 24px; }
.errors { width: 140px; padding-left: 29px; }
.insp-body { flex: 1; min-height: 0; display: flex; flex-direction: column; gap: 13px; padding: 15px 8px 5px; border: 1px solid #d3cdbd; border-top: 0; }
.big { flex: none; display: flex; align-items: center; justify-content: center; gap: 6px; height: 32px; border: 2px solid #8b8778; border-radius: 4px; box-sizing: border-box; background: linear-gradient(#fff, #f5f2ec 50%, #ddd6c5); }
.big .tri { background: #55514a; width: 10px; }
.scroll-box { flex: 1; min-width: 0; min-height: 0; display: flex; box-sizing: border-box; border: 2px solid #77736a; border-width: 2px 1px; }
.action-form { flex: 1; min-width: 0; min-height: 0; display: flex; flex-direction: column; padding: 11px 13px 0 11px; overflow: hidden; }
.note-box { flex: none; display: flex; justify-content: space-between; height: 80px; box-sizing: border-box; margin-bottom: 17px; padding: 10px 9px; border: 1px solid #aca79b; box-shadow: inset 1px 1px 0 #f9f6ef, 1px 1px 0 #f9f6ef; }
.row { flex: none; display: grid; grid-template-columns: 105px 1fr; column-gap: 24px; align-items: center; margin-bottom: 5px; }
.row > label { text-align: right; padding-top: 4px; white-space: nowrap; }
.url-row { grid-template-columns: 105px 31px 1fr; margin-bottom: 9px; }
.url-row .field { height: 28px; padding-top: 2px; }
.pick { position: relative; height: 30px; }
.pick select { appearance: none; width: 100%; height: 100%; box-sizing: border-box; border: 2px solid #77736a; border-radius: 2px; padding: 0 3px; background: #ede7da; outline: 0; }
.pick i { position: absolute; right: 3px; top: 3px; bottom: 3px; width: 22px; border: 1px solid #77736a; background: linear-gradient(135deg, #fff, #ddd6c4); pointer-events: none; }
.pick i::after { content: ''; position: absolute; inset: 0; margin: auto; width: 10px; height: 7px; background: #4d4a42; clip-path: polygon(0 0, 100% 0, 50% 100%); }
.action-form hr { flex: none; height: 1px; margin: 7px -5px 13px -3px; border: 0; background: #aaa596; }
.row.top { align-items: start; margin: 0; }
.row.top label { padding-top: 7px; }
.inset { height: 120px; box-sizing: border-box; padding: 7px; border: 1px solid #aca79b; box-shadow: inset 1px 1px 0 #f9f6ef; }
.inset textarea { display: block; width: 100%; height: 100%; box-sizing: border-box; border: 2px solid #77736a; background: #fff; resize: none; outline: 0; }
.pick.zoom-pick { flex: none; width: 68px; height: 20px; margin-left: 1px; }
.zoom-pick select { border-width: 1px; font-size: 14px; }
.zoom-pick i { width: 9px; }
.zoom-pick i::after { width: 5px; height: 4px; }

.var-tabs { height: 26px; }
.var-tabs .tab.on { height: 26px; }
.vars-tab { margin-left: 31px; width: 98px; padding-left: 9px; }
.frames { width: 79px; padding-left: 10px; }
.var-body { flex: none; height: 277px; box-sizing: border-box; display: flex; flex-direction: column; padding: 6px 7px 0; border: 1px solid #d3cdbd; border-top: 0; }
.var-cols { display: flex; height: 230px; }
.vars { width: 139px; }
.vars li { display: flex; align-items: center; height: 25px; padding-left: 1px; }
.vars li:first-child { margin-top: 2px; height: 23px; }
.vars li.selected { background: #ecdfae; }
.slot { width: 27px; }
.slot .icon { width: 16px; height: 16px; }
.var-form { flex: 1; min-width: 0; overflow: hidden; }
.var-head { display: flex; justify-content: space-between; align-items: center; height: 30px; margin-bottom: 12px; padding: 0 6px 0 3px; border-bottom: 1px solid #c4beb1; background: #f6f2ea; }
.var-row { display: flex; align-items: center; height: 26px; margin-bottom: 8px; padding-right: 5px; }
.var-row label { display: flex; align-items: center; justify-content: flex-end; gap: 5px; width: 61px; padding: 5px 9px 0 0; }
.var-row label i { width: 5px; height: 5px; border-radius: 50%; background: #f01818; }
.var-row input { flex: 1; min-width: 0; height: 26px; box-sizing: border-box; border: 2px solid #77736a; border-radius: 2px; background: #ede7da; }
.var-tools { display: flex; align-items: center; height: 40px; margin-left: -2px; }

.status { flex: none; display: flex; gap: 3px; height: 23px; padding-left: 1px; }
.status > div { box-sizing: border-box; border: 1px solid #8d887a; border-width: 1px 0 0 1px; border-right: 1px solid #fff; border-bottom: 2px solid #fff; }
.ready { width: 301px; padding-left: 1px; font-size: 14px; line-height: 19px; font-weight: bold; color: #222; }
.fill { flex: 1; }
.led { width: 24px; display: flex; align-items: center; justify-content: center; }
.led i { width: 14px; height: 14px; border-radius: 50%; background: radial-gradient(#3fae3a 40%, #8fd07a); }
.end { width: 204px; }
</style>
